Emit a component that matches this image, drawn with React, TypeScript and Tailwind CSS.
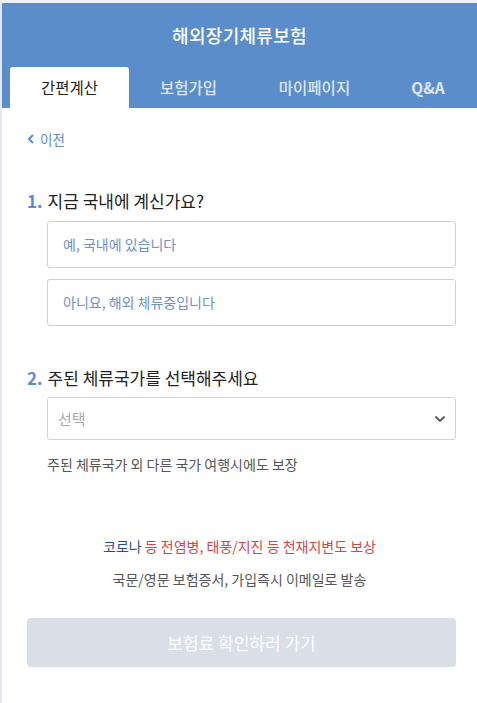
import React from "react";

const font = { fontFamily: '"Noto Sans CJK KR", "Noto Sans", sans-serif' };

export default function App() {
  return (
    <div className="w-[477px] h-[703px] bg-[#e5e7f2] pl-[2px] overflow-hidden" style={font}>
      <div className="bg-white h-full flex flex-col">
        <div className="h-[3px] bg-[#eef2f8]" />
        <div className="bg-[#5b8dcb] flex flex-col">
          <div className="h-[64px] flex items-center justify-center text-white text-[18px] font-medium tracking-[0.3px]">
            해외장기체류보험
          </div>
          <div className="flex h-[41px] pl-[8px] text-[15.5px] font-medium">
            <div className="w-[119px] bg-white rounded-t-[3px] flex items-center justify-center text-[#222] font-normal">간편계산</div>
            <div className="w-[119px] flex items-center justify-center text-[#dde7f5]">보험가입</div>
            <div className="w-[133px] flex items-center justify-center text-[#dde7f5]">마이페이지</div>
            <div className="w-[94px] flex items-center justify-center text-[#dde7f5] font-bold">Q&amp;A</div>
          </div>
        </div>
        <div className="flex flex-col px-[25px]">
          <div className="flex items-center gap-[5px] mt-[21px] text-[13.5px] text-[#5b8dcb]">
            <svg width="8" height="10" viewBox="0 0 8 10"><path d="M6 1 L2 5 L6 9" stroke="#5b8dcb" strokeWidth="2" fill="none" /></svg>
            <span>이전</span>
          </div>
          <div className="mt-[39px] text-[17px] text-[#222] flex items-center">
            <span className="text-[#5b8dcb] font-bold mr-[5px]">1.</span>지금 국내에 계신가요?
          </div>
          <div className="ml-[20px] mr-[-4px] mt-[7px] flex flex-col gap-[11px]">
            <div className="h-[47px] border border-[#cfcfcf] rounded-[3px] flex items-center pl-[15px] text-[14px] text-[#7090c2]">예, 국내에 있습니다</div>
            <div className="h-[47px] border border-[#cfcfcf] rounded-[3px] flex items-center pl-[15px] text-[14px] text-[#7090c2]">아니요, 해외 체류중입니다</div>
          </div>
          <div className="mt-[39px] text-[17px] text-[#222] flex items-center">
            <span className="text-[#5b8dcb] font-bold mr-[5px]">2.</span>주된 체류국가를 선택해주세요
          </div>
          <div className="ml-[20px] mr-[-4px] mt-[7px] h-[43px] border border-[#d3d3d3] rounded-[3px] flex items-center justify-between pl-[10px] pr-[9px] text-[15px] text-[#aaa]">
            <span>선택</span>
            <svg width="12" height="8" viewBox="0 0 12 8"><path d="M1.5 1.5 L6 6 L10.5 1.5" stroke="#555" strokeWidth="1.8" fill="none" /></svg>
          </div>
          <div className="ml-[20px] mt-[14px] text-[14px] text-[#555]">주된 체류국가 외 다른 국가 여행시에도 보장</div>
          <div className="mt-[61px] text-center text-[14px]">
            <span className="text-[#1f4f98]">코로나</span> <span className="text-[#d04848]">등 전염병, 태풍/지진 등 천재지변도 보상</span>
          </div>
          <div className="mt-[12px] text-center text-[14px] text-[#555]">국문/영문 보험증서, 가입즉시 이메일로 발송</div>
          <div className="mt-[28px] mr-[-4px] h-[49px] bg-[#d9dee7] rounded-[4px] flex items-center justify-center text-white text-[17px]">
            보험료 확인하러 가기
          </div>
        </div>
      </div>
    </div>
  );
}
